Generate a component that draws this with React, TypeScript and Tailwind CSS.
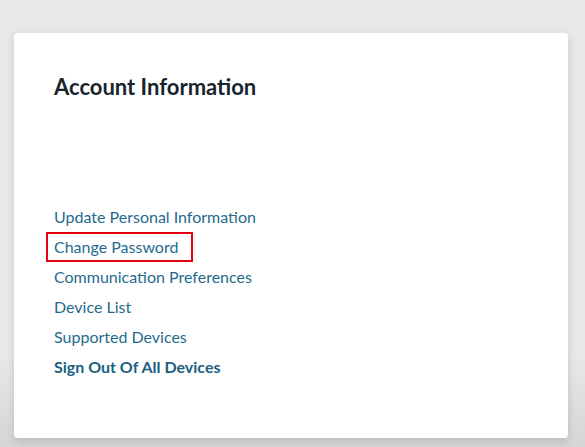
const links = [
  "Update Personal Information",
  "Change Password",
  "Communication Preferences",
  "Device List",
  "Supported Devices",
];

export default function App() {
  return (
    <div
      className="h-[447px] w-[585px] overflow-hidden bg-gradient-to-b from-[#e8e8e8] from-80% to-[#d4d5d5] pt-[33px] pl-[14px]"
      style={{ fontFamily: "Lato, 'Open Sans', sans-serif" }}
    >
      <div className="h-[405px] w-[554px] rounded-[4px] bg-white pt-[40px] pl-[40px] shadow-[0_3px_8px_rgba(0,0,0,0.14)]">
        <h1 className="text-[22px] leading-[28px] font-bold text-[#18252c]">Account Information</h1>
        <ul className="mt-[101px] flex flex-col">
          {links.map((label) =>
            label === "Change Password" ? (
              <li key={label}>
                <a className="-ml-[8px] flex h-[30px] w-[147px] items-center border-2 border-[#e3000f] px-[6px] text-[16px] text-[#1f6b8e]">
                  {label}
                </a>
              </li>
            ) : (
              <li key={label}>
                <a className="flex h-[30px] items-center text-[16px] text-[#1f6b8e]">{label}</a>
              </li>
            )
          )}
          <li>
            <a className="flex h-[30px] items-center text-[16px] font-bold text-[#1a5f80]">
              Sign Out Of All Devices
            </a>
          </li>
        </ul>
      </div>
    </div>
  );
}
